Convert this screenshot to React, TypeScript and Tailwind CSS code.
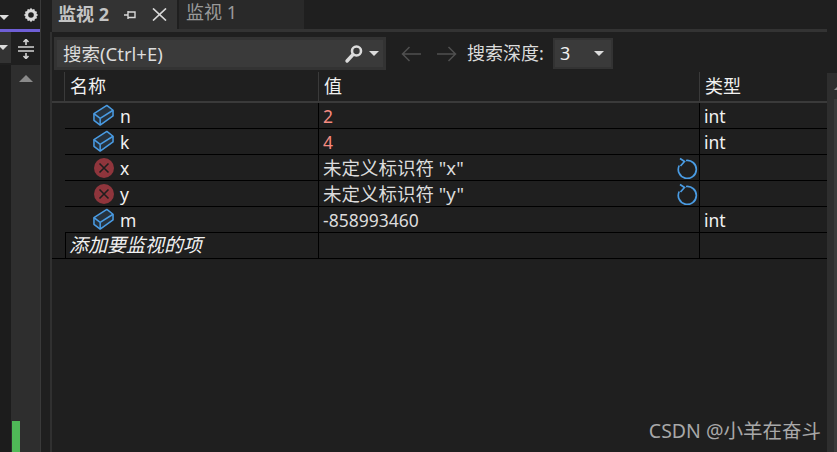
import React from "react";

const font = { fontFamily: '"Noto Sans","Noto Sans CJK SC",sans-serif' };

function Cube() {
  return (
    <svg width="22" height="23" viewBox="0 0 22 23" fill="none" stroke="#4a9ce4" strokeWidth="1.6" strokeLinejoin="round">
      <path d="M1 9.5 L14.5 1 L21 6 L21 12 L7.5 21.5 L1 16.5 Z" fill="#26323d" />
      <path d="M1 9.5 L7.5 14.5 L21 6 M7.5 14.5 L7.5 21.5" />
    </svg>
  );
}
function Err() {
  return (
    <svg width="20" height="20" viewBox="0 0 20 20">
      <circle cx="10" cy="10" r="10" fill="#8f353c" />
      <path d="M5.5 5.5 L14.5 14.5 M14.5 5.5 L5.5 14.5" stroke="#1e1e1e" strokeWidth="1.6" />
    </svg>
  );
}
function Refresh() {
  return (
    <svg width="21" height="22" viewBox="0 0 21 22" fill="none" stroke="#4a9ce4" strokeWidth="1.7">
      <path d="M9 3.5 A9 9 0 1 1 2.2 8.5" />
      <path d="M3 1.5 L7.5 4.5 L3.5 9" />
    </svg>
  );
}
function Caret({ className = "" }: { className?: string }) {
  return <div className={`w-0 h-0 border-l-[5px] border-r-[5px] border-t-[5px] border-l-transparent border-r-transparent border-t-[#dcdcdc] ${className}`} />;
}

const rows = [
  { n: "n", v: "2", t: "int", icon: "c", red: true },
  { n: "k", v: "4", t: "int", icon: "c", red: true },
  { n: "x", v: '未定义标识符 "x"', t: "", icon: "e", refresh: true },
  { n: "y", v: '未定义标识符 "y"', t: "", icon: "e", refresh: true },
  { n: "m", v: "-858993460", t: "int", icon: "c" },
];

export default function App() {
  return (
    <div className="relative flex w-[837px] h-[452px] overflow-hidden bg-[#1f1f1f] text-[#f1f1f1]" style={font}>
      {/* left strip */}
      <div className="flex flex-col w-[40px] shrink-0 bg-[#1f1f1f]">
        <div className="h-[29px] flex items-center shrink-0">
          <Caret className="-ml-[1px] mr-[14px] mt-[5px]" />
          <svg width="16" height="16" viewBox="0 0 16 16">
            <path d="M8 0.8l1.3 1.7 2-.5.6 2.1 2.1.6-.5 2L15.2 8l-1.7 1.3.5 2-2.1.6-.6 2.1-2-.5L8 15.2l-1.3-1.7-2 .5-.6-2.1-2.1-.6.5-2L.8 8l1.7-1.3-.5-2 2.1-.6.6-2.1 2 .5z" fill="#d8d8d8" />
            <circle cx="8" cy="8" r="2.8" fill="#1f1f1f" />
          </svg>
        </div>
        <div className="h-[3px] bg-[#6f5fd6] shrink-0" />
        <div className="flex h-[33px] shrink-0">
          <div className="w-[11px] h-[31px] bg-[#333333] flex items-center"><Caret className="-ml-[2px]" /></div>
          <div className="flex-1 flex items-center justify-center">
            <svg width="18" height="20" viewBox="0 0 18 20" fill="none" stroke="#d4d4d4" strokeWidth="1.6">
              <path d="M1 8H17M1 12H17M9 0.5V6M9 14V19.5M6.5 3L9 0.5L11.5 3M6.5 17L9 19.5L11.5 17" />
            </svg>
          </div>
        </div>
        <div className="flex flex-1">
          <div className="w-[11px] bg-[#1c1c1c]" />
          <div className="w-[29px] bg-[#2e2e2e] flex flex-col items-center justify-between pt-[10px]">
            <div className="w-0 h-0 border-l-[7px] border-r-[7px] border-b-[7px] border-l-transparent border-r-transparent border-b-[#8a8a8a]" />
            <div className="self-start ml-[1px] w-[8px] h-[31px] bg-[#4fb857]" />
          </div>
        </div>
      </div>
      <div className="w-[1px] bg-[#3a3a3a] shrink-0" />
      <div className="w-[9px] shrink-0" />
      <div className="w-[2px] mt-[32px] bg-[#303030] shrink-0" />

      {/* main */}
      <div className="flex flex-col flex-1 min-w-0">
        <div className="flex h-[29px] shrink-0">
          <div className="flex items-center w-[125px] bg-[#333333] pl-[6px] text-[#c4c4c4] text-[18px] font-bold">
            <span>监视 2</span>
            <svg width="12" height="10" viewBox="0 0 12 10" className="ml-[15px]" fill="none" stroke="#d8d8d8" strokeWidth="1.4">
              <path d="M0 5H4M4 1V9M4 2H11V7.5H4" />
            </svg>
            <svg width="15" height="13" viewBox="0 0 15 13" className="ml-[16px]" fill="none" stroke="#d8d8d8" strokeWidth="1.7">
              <path d="M1 0.5L14 12.5M14 0.5L1 12.5" />
            </svg>
          </div>
          <div className="ml-[2px] w-[125px] bg-[#292929] pl-[7px] text-[18px] text-[#9a9a9a] leading-[25px]">监视 1</div>
        </div>
        <div className="h-[3px] bg-[#333333] shrink-0" />

        {/* toolbar */}
        <div className="flex items-center h-[40px] shrink-0 pt-[4px] pb-[1px]">
          <div className="flex items-center w-[332px] ml-[2px] h-[33px] bg-[#3a3a3a] border-[3px] border-[#333333] pl-[6px] text-[18.5px] text-[#dcdcdc]">
            <span className="flex-1">搜索(Ctrl+E)</span>
            <svg width="20" height="20" viewBox="0 0 20 20" fill="none" stroke="#dcdcdc" className="mr-[1px]">
              <circle cx="12.5" cy="7" r="4.5" strokeWidth="2.6" />
              <path d="M9 10.5L3 17" strokeWidth="3.4" strokeLinecap="round" />
            </svg>
            <Caret className="mx-[4px]" />
          </div>
          <svg width="20" height="16" viewBox="0 0 20 16" className="ml-[15px]" fill="none" stroke="#505050" strokeWidth="1.5"><path d="M20 8H1.5M8.5 1L1.5 8L8.5 15" /></svg>
          <svg width="20" height="16" viewBox="0 0 20 16" className="ml-[16px]" fill="none" stroke="#505050" strokeWidth="1.5"><path d="M0 8H18.5M11.5 1L18.5 8L11.5 15" /></svg>
          <span className="ml-[10px] w-[86px] text-[18px] text-[#dcdcdc] whitespace-nowrap">搜索深度:</span>
          <div className="flex items-center justify-between w-[60px] h-[31px] bg-[#3a3a3a] border-[2px] border-[#333333] pl-[5px] pr-[7px] text-[18px]">
            <span>3</span>
            <Caret />
          </div>
        </div>

        {/* table */}
        <div className="flex flex-col flex-1 min-h-0">
          <div className="flex h-[31px] shrink-0 border-b-2 border-[#3a3a3a] text-[18px]">
            <div className="w-[12px]" />
            <div className="w-[254px] border-l border-[#3a3a3a] pl-[5px] leading-[28px]">名称</div>
            <div className="w-[381px] border-l border-[#3a3a3a] pl-[5px] leading-[28px]">值</div>
            <div className="flex-1 border-l border-[#3a3a3a] pl-[5px] leading-[28px]">类型</div>
          </div>
          {rows.map((r) => (
            <div key={r.n} className="flex h-[26px] shrink-0 border-b border-black text-[17.5px] ml-[13px]">
              <div className="flex items-center w-[253px] pl-[28px]">
                <div className="w-[21px] flex justify-center">{r.icon === "c" ? <Cube /> : <Err />}</div>
                <span className="ml-[6px] pt-[1px]">{r.n}</span>
              </div>
              <div className={`flex items-center w-[381px] border-l border-black pl-[4px] pr-[1px] ${r.red ? "text-[#f58a80]" : "text-[#dcdcdc]"}`}>
                <span className={`flex-1 pt-[1px] whitespace-nowrap ${r.refresh ? "text-[18.5px]" : ""}`}>{r.v}</span>
                {r.refresh && <Refresh />}
              </div>
              <div className="flex-1 flex items-center border-l border-black pl-[4px] pt-[1px]">{r.t}</div>
            </div>
          ))}
          <div className="flex h-[26px] shrink-0 border-b border-black text-[19px]">
            <div className="w-[13px]" />
            <div className="w-[253px] border-l border-black pl-[3px] italic leading-[25px]">添加要监视的项</div>
            <div className="w-[381px] border-l border-black" />
            <div className="flex-1 border-l border-black" />
          </div>
        </div>
      </div>

      {/* right scroll */}
      <div className="w-[10px] shrink-0 flex flex-col pt-[73px]">
        <div className="flex flex-col flex-1 bg-[#2e2e2e] pl-[7px] pt-[14px]">
          <div className="w-0 h-0 border-l-[3px] border-r-[3px] border-b-[3px] border-l-transparent border-r-transparent border-b-[#8a8a8a]" />
          <div className="flex-1 mt-[9px] bg-[#3a3a3a]" />
        </div>
      </div>

      <div className="absolute right-[16px] bottom-[7px] text-[19.5px] text-[#a8a8a8]">CSDN @小羊在奋斗</div>
    </div>
  );
}
